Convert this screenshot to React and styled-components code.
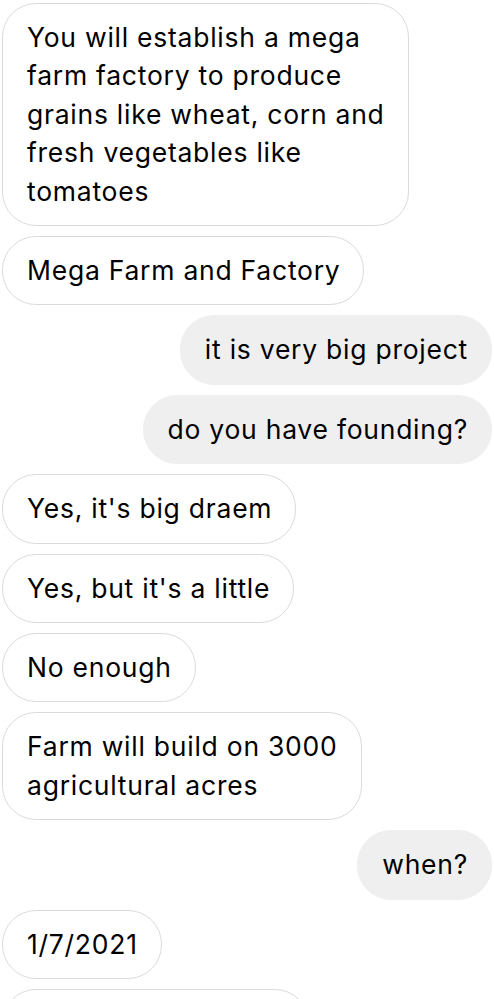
import React from 'react';
import styled, { createGlobalStyle } from 'styled-components';

const GlobalStyle = createGlobalStyle`
  html, body {
    margin: 0;
    padding: 0;
    background: #ffffff;
  }
  body {
    font-family: Inter, 'Liberation Sans', Arial, sans-serif;
    -webkit-font-smoothing: antialiased;
  }
`;

// line breaks follow the wrapping of the original thread
const messages = [
  { from: 'them', text: 'You will establish a mega\nfarm factory to produce\ngrains like wheat, corn and\nfresh vegetables like\ntomatoes' },
  { from: 'them', text: 'Mega Farm and Factory' },
  { from: 'me', text: 'it is very big project' },
  { from: 'me', text: 'do you have founding?' },
  { from: 'them', text: "Yes, it's big draem" },
  { from: 'them', text: "Yes, but it's a little" },
  { from: 'them', text: 'No enough' },
  { from: 'them', text: 'Farm will build on 3000\nagricultural acres' },
  { from: 'me', text: 'when?' },
  { from: 'them', text: '1/7/2021' },
  { from: 'them', text: 'Thank you so much' },
];

const Thread = styled.main`
  display: flex;
  flex-direction: column;
  gap: 10px;
  padding: 3px 2px 0 2px;
  height: 999px;
  overflow: hidden;
  box-sizing: border-box;
`;

const Bubble = styled.div`
  align-self: ${(p) => (p.$mine ? 'flex-end' : 'flex-start')};
  box-sizing: border-box;
  padding: 14px 23px 15px 24px;
  border-radius: 34px;
  font-size: 26.5px;
  line-height: 38.4px;
  white-space: pre-line;
  color: #000000;
  letter-spacing: 0.75px;
  background: ${(p) => (p.$mine ? '#efefef' : '#ffffff')};
  border: 1px solid ${(p) => (p.$mine ? '#efefef' : '#dbdbdb')};
`;

const App = () => (
  <>
    <GlobalStyle />
    <Thread>
      {messages.map((m, i) => (
        <Bubble key={i} $mine={m.from === 'me'}>
          {m.text}
        </Bubble>
      ))}
    </Thread>
  </>
);

export default App;
